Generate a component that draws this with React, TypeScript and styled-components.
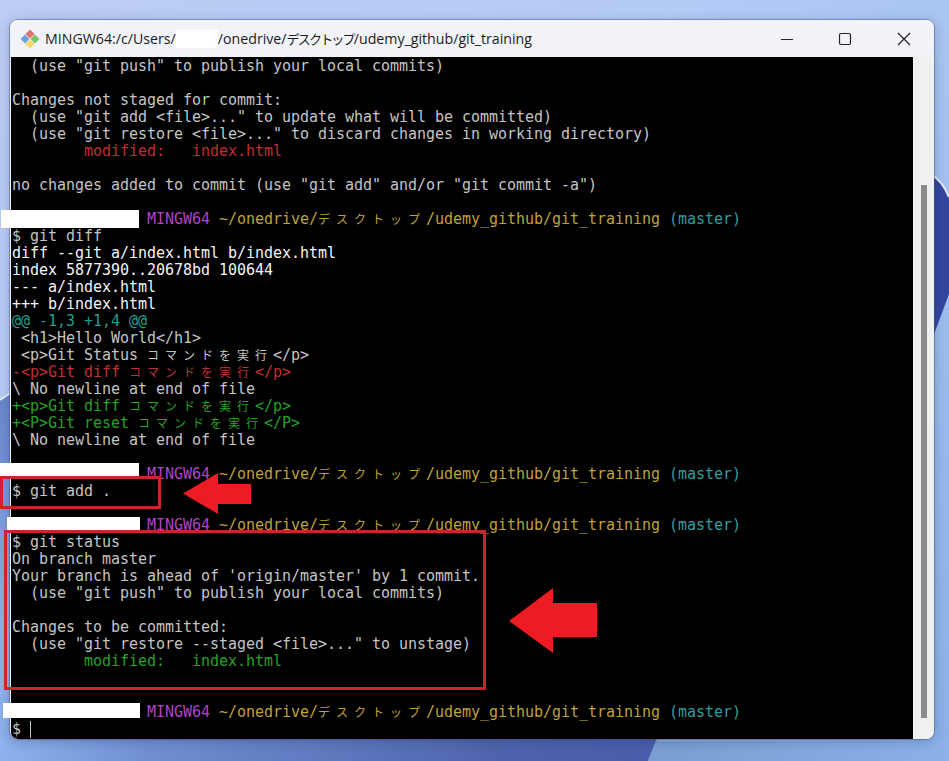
import styled, { createGlobalStyle } from "styled-components"

const GlobalStyle = createGlobalStyle`
    html, body {
        margin: 0;
        padding: 0;
        background: #8fb0e6;
    }
`

const tones = {
    plain: "#c4c4c4",
    bright: "#f4f4f4",
    red: "#bf2f35",
    green: "#26a226",
    cyan: "#1f9f8f",
    purple: "#b044c4",
    yellow: "#bfa238",
    teal: "#339d9d",
}

type Tone = keyof typeof tones

const Desktop = styled.div`
    position: relative;
    width: 949px;
    height: 761px;
    padding: 20px 15px 22px 10px;
    box-sizing: border-box;
    overflow: hidden;
`
const Wallpaper = styled.svg`
    position: absolute;
    left: 0;
    top: 0;
`
const Window = styled.div`
    position: relative;
    display: flex;
    flex-direction: column;
    height: 100%;
    border-radius: 8px;
    overflow: hidden;
    background: #f0f0f0;
    box-shadow: 0 0 0 1px rgba(70, 80, 120, 0.45), 0 2px 12px rgba(30, 40, 90, 0.3);
`
const TitleBar = styled.header`
    display: flex;
    align-items: center;
    flex: 0 0 37px;
    padding-left: 10px;
    background: #f1f3f9;
`
const Title = styled.span`
    margin-left: 5px;
    font-family: "Open Sans", "Noto Sans CJK JP", sans-serif;
    font-size: 14.2px;
    color: #1c1c1c;
    white-space: nowrap;
`
const TitleKana = styled.span`
    font-family: "Noto Sans CJK JP", sans-serif;
    font-size: 13px;
    letter-spacing: -1.8px;
`
const HiddenName = styled.span`
    display: inline-block;
    width: 42px;
    height: 18px;
    vertical-align: -4px;
    background: #fff;
`
const Controls = styled.div`
    display: flex;
    margin-left: auto;
    margin-right: 1px;
`
const ControlButton = styled.button`
    display: flex;
    align-items: center;
    justify-content: center;
    width: 58.5px;
    height: 37px;
    padding: 0;
    border: 0;
    background: none;
`
const Body = styled.div`
    display: flex;
    flex: 1;
    min-height: 0;
`
const Terminal = styled.main`
    flex: 1;
    margin-left: 1px;
    padding: 1px 0 0 1px;
    overflow: hidden;
    background: #000;
    border-bottom-left-radius: 7px;
    font-family: "DejaVu Sans Mono", "Noto Sans CJK JP", monospace;
    font-size: 15px;
    letter-spacing: -0.03px;
`
const Line = styled.div<{ $tone?: Tone }>`
    height: 17px;
    line-height: 17px;
    white-space: pre;
    color: ${(p) => tones[p.$tone ?? "plain"]};
`
const Ink = styled.span<{ $tone: Tone }>`
    color: ${(p) => tones[p.$tone]};
`
const Wide = styled.span`
    font-family: "Noto Sans CJK JP", sans-serif;
    font-size: 12px;
    line-height: 0;
    letter-spacing: 6px;
`
const Caret = styled.span`
    display: inline-block;
    width: 1px;
    height: 17px;
    vertical-align: -4px;
    background: #c4c4c4;
`
const ScrollTrack = styled.aside`
    flex: 0 0 21px;
    padding: 128px 7px 21px 8px;
    box-sizing: border-box;
    background: #f0f0f0;
`
const ScrollThumb = styled.div`
    height: 100%;
    background: #8b8b8b;
`

// redaction bars and the red markup lie over the screenshot
const Redaction = styled.div<{ $x: number; $y: number; $w: number; $h: number }>`
    position: absolute;
    left: ${(p) => p.$x}px;
    top: ${(p) => p.$y}px;
    width: ${(p) => p.$w}px;
    height: ${(p) => p.$h}px;
    background: #fff;
`
const Callout = styled.div<{ $x: number; $y: number; $w: number; $h: number }>`
    position: absolute;
    left: ${(p) => p.$x}px;
    top: ${(p) => p.$y}px;
    width: ${(p) => p.$w}px;
    height: ${(p) => p.$h}px;
    box-sizing: border-box;
    border: 3px solid #c9252e;
`
const Arrow = styled.svg<{ $x: number; $y: number }>`
    position: absolute;
    left: ${(p) => p.$x}px;
    top: ${(p) => p.$y}px;
`

const GitLogo = () => (
    <svg width="20" height="20" viewBox="0 0 20 20">
        <path d="M10 .5 14.6 5.1 10 9.4 5.4 5.1Z" fill="#e0736c" />
        <path d="M.5 10 5.1 5.6 9.4 10 5.1 14.4Z" fill="#6aa3e2" />
        <path d="M19.5 10 14.9 5.6 10.6 10 14.9 14.4Z" fill="#7cc266" />
        <path d="M10 19.5 14.6 14.9 10 10.6 5.4 14.9Z" fill="#f2d66e" />
    </svg>
)

const Prompt = () => (
    <Line>
        {"               "}
        <Ink $tone="purple">MINGW64 </Ink>
        <Ink $tone="yellow">
            ~/onedrive/<Wide>デスクトップ</Wide>/udemy_github/git_training
        </Ink>{" "}
        <Ink $tone="teal">(master)</Ink>
    </Line>
)

export default function App() {
    return (
        <>
            <GlobalStyle />
            <Desktop>
                <Wallpaper width="949" height="761" viewBox="0 0 949 761">
                    <defs>
                        <linearGradient id="sky" x1="0" y1="0" x2="1" y2="1">
                            <stop offset="0" stopColor="#bccdf4" />
                            <stop offset="0.35" stopColor="#b4cbf6" />
                            <stop offset="1" stopColor="#8ab0e6" />
                        </linearGradient>
                        <linearGradient id="petal" x1="0" y1="0" x2="1" y2="0">
                            <stop offset="0" stopColor="#8fb2ec" />
                            <stop offset="0.18" stopColor="#6f8fd2" />
                            <stop offset="0.6" stopColor="#4f63ac" />
                            <stop offset="1" stopColor="#4256a8" />
                        </linearGradient>
                        <linearGradient id="shade" x1="0" y1="0" x2="0" y2="1">
                            <stop offset="0" stopColor="#6a86cc" />
                            <stop offset="1" stopColor="#6a86cc" stopOpacity="0" />
                        </linearGradient>
                        <linearGradient id="lower" x1="0" y1="0" x2="1" y2="0">
                            <stop offset="0" stopColor="#7a9dd0" />
                            <stop offset="1" stopColor="#8cb1e8" />
                        </linearGradient>
                    </defs>
                    <rect width="949" height="761" fill="url(#sky)" />
                    <path d="M0 400 10 393 832 300 648 761H0Z" fill="url(#petal)" />
                    <path d="M0 400 10 393V640H0Z" fill="url(#shade)" />
                    <path d="M0 400 12 392" stroke="#e8eefb" strokeWidth="2" />
                    <path d="M648 761 656 741H949V761Z" fill="url(#lower)" />
                    <path d="M930 174Q942 180 949 197V294L930 345Z" fill="#34459e" />
                    <path d="M930 174Q942 180 949 197" stroke="#dfe8fa" strokeWidth="2" fill="none" />
                </Wallpaper>
                <Window>
                    <TitleBar>
                        <GitLogo />
                        <Title>
                            MINGW64:/c/Users/<HiddenName />/onedrive/<TitleKana>デスクトップ</TitleKana>/udemy_github/git_training
                        </Title>
                        <Controls>
                            <ControlButton>
                                <svg width="14" height="14" viewBox="0 0 14 14">
                                    <path d="M1 7.5H13" stroke="#222" strokeWidth="1.2" />
                                </svg>
                            </ControlButton>
                            <ControlButton>
                                <svg width="14" height="14" viewBox="0 0 14 14">
                                    <rect x="1.5" y="1.5" width="11" height="11" rx="1.5" fill="none" stroke="#222" strokeWidth="1.2" />
                                </svg>
                            </ControlButton>
                            <ControlButton>
                                <svg width="14" height="14" viewBox="0 0 14 14">
                                    <path d="M1 1 13 13M13 1 1 13" stroke="#222" strokeWidth="1.2" />
                                </svg>
                            </ControlButton>
                        </Controls>
                    </TitleBar>
                    <Body>
                        <Terminal>
                            <Line>{'  (use "git push" to publish your local commits)'}</Line>
                            <Line> </Line>
                            <Line>Changes not staged for commit:</Line>
                            <Line>{'  (use "git add <file>..." to update what will be committed)'}</Line>
                            <Line>{'  (use "git restore <file>..." to discard changes in working directory)'}</Line>
                            <Line $tone="red">{"        modified:   index.html"}</Line>
                            <Line> </Line>
                            <Line>{'no changes added to commit (use "git add" and/or "git commit -a")'}</Line>
                            <Line> </Line>
                            <Prompt />
                            <Line>$ git diff</Line>
                            <Line $tone="bright">diff --git a/index.html b/index.html</Line>
                            <Line $tone="bright">index 5877390..20678bd 100644</Line>
                            <Line $tone="bright">--- a/index.html</Line>
                            <Line $tone="bright">+++ b/index.html</Line>
                            <Line $tone="cyan">@@ -1,3 +1,4 @@</Line>
                            <Line>{" <h1>Hello World</h1>"}</Line>
                            <Line>
                                {" <p>Git Status "}<Wide>コマンドを実行</Wide>{"</p>"}
                            </Line>
                            <Line $tone="red">
                                {"-<p>Git diff "}<Wide>コマンドを実行</Wide>{"</p>"}
                            </Line>
                            <Line>\ No newline at end of file</Line>
                            <Line $tone="green">
                                {"+<p>Git diff "}<Wide>コマンドを実行</Wide>{"</p>"}
                            </Line>
                            <Line $tone="green">
                                {"+<P>Git reset "}<Wide>コマンドを実行</Wide>{"</P>"}
                            </Line>
                            <Line>\ No newline at end of file</Line>
                            <Line> </Line>
                            <Prompt />
                            <Line>$ git add .</Line>
                            <Line> </Line>
                            <Prompt />
                            <Line>$ git status</Line>
                            <Line>On branch master</Line>
                            <Line>Your branch is ahead of 'origin/master' by 1 commit.</Line>
                            <Line>{'  (use "git push" to publish your local commits)'}</Line>
                            <Line> </Line>
                            <Line>Changes to be committed:</Line>
                            <Line>{'  (use "git restore --staged <file>..." to unstage)'}</Line>
                            <Line $tone="green">{"        modified:   index.html"}</Line>
                            <Line> </Line>
                            <Line> </Line>
                            <Prompt />
                            <Line>
                                {"$ "}<Caret />
                            </Line>
                        </Terminal>
                        <ScrollTrack>
                            <ScrollThumb />
                        </ScrollTrack>
                    </Body>
                </Window>
                <Redaction $x={1} $y={210} $w={138} $h={18} />
                <Redaction $x={0} $y={463} $w={139} $h={15} />
                <Redaction $x={7} $y={517} $w={133} $h={15} />
                <Redaction $x={3} $y={703} $w={137} $h={15} />
                <Callout $x={0} $y={476} $w={161} $h={33} />
                <Callout $x={4} $y={530} $w={482} $h={160} />
                <Arrow $x={183} $y={473} width="68" height="41" viewBox="0 0 68 41">
                    <path d="M0 20.5 35 0V11H68V31H35V41Z" fill="#ed1c24" />
                </Arrow>
                <Arrow $x={509} $y={588} width="88" height="65" viewBox="0 0 88 65">
                    <path d="M0 33 44 0V15H88V49H44V65Z" fill="#ed1c24" />
                </Arrow>
            </Desktop>
        </>
    )
}
